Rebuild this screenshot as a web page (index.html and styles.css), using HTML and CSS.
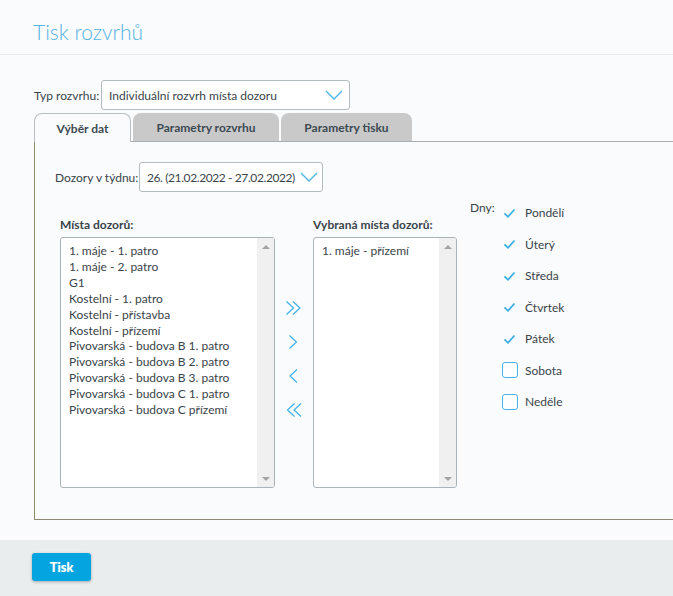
FILE: index.html
```html
<!DOCTYPE html>
<html lang="cs">
<head>
<meta charset="utf-8">
<title>Tisk rozvrhů</title>
<link rel="stylesheet" href="styles.css">
</head>
<body>
<header class="page-head">
  <h1 class="page-title">Tisk rozvrhů</h1>
</header>
<main class="page-body">
  <div class="field type-field">
    <span class="field-label">Typ rozvrhu:</span>
    <div class="select select-type">
      <span class="select-value">Individuální rozvrh místa dozoru</span>
      <svg class="chev" viewBox="0 0 18 10" width="18" height="10"><path d="M1 1 L9 9 L17 1"/></svg>
    </div>
  </div>
  <nav class="tabs">
    <div class="tab tab-active tab-1">Výběr dat</div>
    <div class="tab tab-2">Parametry rozvrhu</div>
    <div class="tab tab-3">Parametry tisku</div>
  </nav>
  <section class="panel">
    <div class="field week-field">
      <span class="field-label">Dozory v týdnu:</span>
      <div class="select select-week">
        <span class="select-value">26. (21.02.2022 - 27.02.2022)</span>
        <svg class="chev" viewBox="0 0 18 10" width="18" height="10"><path d="M1 1 L9 9 L17 1"/></svg>
      </div>
    </div>
    <div class="picker">
      <div class="list-col list-col-all">
        <div class="list-label">Místa dozorů:</div>
        <div class="listbox listbox-all">
          <ul class="list-items">
            <li>1. máje - 1. patro</li>
            <li>1. máje - 2. patro</li>
            <li>G1</li>
            <li>Kostelní - 1. patro</li>
            <li>Kostelní - přístavba</li>
            <li>Kostelní - přízemí</li>
            <li>Pivovarská - budova B 1. patro</li>
            <li>Pivovarská - budova B 2. patro</li>
            <li>Pivovarská - budova B 3. patro</li>
            <li>Pivovarská - budova C 1. patro</li>
            <li>Pivovarská - budova C přízemí</li>
          </ul>
          <div class="scrollbar"><span class="sb-up"></span><span class="sb-down"></span></div>
        </div>
      </div>
      <div class="moves">
        <button class="move" title="Přidat vše"><svg viewBox="0 0 18 16" width="18" height="16"><path d="M1.5 1.5 L8.5 8 L1.5 14.5 M8 1.5 L15 8 L8 14.5"/></svg></button>
        <button class="move" title="Přidat"><svg viewBox="0 0 18 16" width="18" height="16"><path d="M4.5 1.5 L11.5 8 L4.5 14.5"/></svg></button>
        <button class="move" title="Odebrat"><svg viewBox="0 0 18 16" width="18" height="16"><path d="M12 1.5 L5 8 L12 14.5"/></svg></button>
        <button class="move" title="Odebrat vše"><svg viewBox="0 0 18 16" width="18" height="16"><path d="M9.5 1.5 L2.5 8 L9.5 14.5 M16 1.5 L9 8 L16 14.5"/></svg></button>
      </div>
      <div class="list-col list-col-sel">
        <div class="list-label">Vybraná místa dozorů:</div>
        <div class="listbox listbox-sel">
          <ul class="list-items">
            <li>1. máje - přízemí</li>
          </ul>
          <div class="scrollbar"><span class="sb-up"></span><span class="sb-down"></span></div>
        </div>
      </div>
      <div class="days">
        <span class="days-label">Dny:</span>
        <ul class="day-list">
          <li class="day is-checked"><span class="cb"><svg viewBox="0 0 16 16" width="16" height="16"><path d="M2.5 8.3 L6 11.8 L12.5 4.5"/></svg></span>Pondělí</li>
          <li class="day is-checked"><span class="cb"><svg viewBox="0 0 16 16" width="16" height="16"><path d="M2.5 8.3 L6 11.8 L12.5 4.5"/></svg></span>Úterý</li>
          <li class="day is-checked"><span class="cb"><svg viewBox="0 0 16 16" width="16" height="16"><path d="M2.5 8.3 L6 11.8 L12.5 4.5"/></svg></span>Středa</li>
          <li class="day is-checked"><span class="cb"><svg viewBox="0 0 16 16" width="16" height="16"><path d="M2.5 8.3 L6 11.8 L12.5 4.5"/></svg></span>Čtvrtek</li>
          <li class="day is-checked"><span class="cb"><svg viewBox="0 0 16 16" width="16" height="16"><path d="M2.5 8.3 L6 11.8 L12.5 4.5"/></svg></span>Pátek</li>
          <li class="day"><span class="cb cb-empty"></span>Sobota</li>
          <li class="day"><span class="cb cb-empty"></span>Neděle</li>
        </ul>
      </div>
    </div>
  </section>
</main>
<footer class="page-foot">
  <button class="btn-print">Tisk</button>
</footer>
</body>
</html>
```
FILE: styles.css
```css
html, body {
  margin: 0;
  padding: 0;
  overflow: hidden;
}
body {
  background: #f9fbfc;
  font-family: Lato, "Liberation Sans", sans-serif;
  font-size: 12px;
  color: #3a444a;
  width: 673px;
  height: 596px;
}
ul { list-style: none; margin: 0; padding: 0; }

.page-head {
  height: 54px;
  border-bottom: 1px solid #e6eaec;
  padding-left: 33px;
}
.page-title {
  margin: 0;
  padding-top: 19px;
  font-weight: 300;
  font-size: 21px;
  line-height: 25px;
  color: #56b3e3;
}

.page-body {
  padding: 25px 0 0 34px;
}

.field {
  display: flex;
  align-items: center;
  height: 30px;
}
.field-label {
  white-space: nowrap;
}
.type-field .field-label { width: 67px; }
.week-field .field-label { width: 84px; }
.select {
  box-sizing: border-box;
  height: 30px;
  border: 1px solid #b3bcc0;
  border-radius: 3px;
  background: #fff;
  display: flex;
  align-items: center;
  padding-left: 7px;
}
.select-value { flex: 1; white-space: nowrap; }
.select-type { width: 249px; }
.select-week { width: 184px; }
.select-week .select-value { letter-spacing: -0.4px; }
.chev {
  fill: none;
  stroke: #4db4e6;
  stroke-width: 1.3;
}
.select-type .chev { margin-right: 6px; }
.select-week .chev { margin-right: 4px; }

.tabs {
  display: flex;
  align-items: flex-start;
  margin-top: 3px;
  height: 28px;
}
.tab {
  box-sizing: border-box;
  height: 28px;
  border-radius: 8px 8px 0 0;
  background: #c9c9c9;
  font-weight: bold;
  color: #3d4a52;
  display: flex;
  align-items: center;
  justify-content: center;
  margin-right: 2px;
  padding-top: 1px;
}
.tab-active {
  position: relative;
  z-index: 1;
  height: 29px;
  background: #f9fbfc;
  border: 1px solid #b7bfc3;
  border-bottom: none;
  padding-top: 0;
}
.tab-1 { width: 97px; }
.tab-2 { width: 146px; }
.tab-3 { width: 131px; }

.panel {
  box-sizing: border-box;
  height: 379px;
  border-top: 1px solid #a7afb3;
  border-left: 1px solid #8d8c70;
  border-bottom: 1px solid #8d8c70;
  padding: 20px 0 0 20px;
}

.picker {
  display: flex;
  align-items: flex-start;
  margin-top: 5px;
}
.list-col { padding-top: 20px; }
.list-col-all { margin-left: 5px; }
.list-label {
  font-weight: bold;
  line-height: 16px;
  margin-bottom: 4px;
  white-space: nowrap;
}
.listbox {
  box-sizing: border-box;
  height: 251px;
  background: #fff;
  border: 1px solid #aab3b7;
  border-radius: 3px;
  display: flex;
  overflow: hidden;
}
.listbox-all { width: 215px; }
.listbox-sel { width: 144px; }
.list-items {
  flex: 1;
  padding: 5px 8px;
  line-height: 15.9px;
  white-space: nowrap;
}
.scrollbar {
  width: 17px;
  background: #f0f0f0;
  display: flex;
  flex-direction: column;
  justify-content: space-between;
  align-items: center;
  padding: 7px 0 6px;
}
.sb-up, .sb-down {
  width: 0;
  height: 0;
  border-left: 4px solid transparent;
  border-right: 4px solid transparent;
}
.sb-up { border-bottom: 4px solid #a3a3a3; }
.sb-down { border-top: 4px solid #a3a3a3; }

.moves {
  width: 38px;
  padding-top: 94px;
  display: flex;
  flex-direction: column;
}
.move {
  height: 34px;
  padding: 0;
  margin: 0;
  border: none;
  background: none;
  display: flex;
  align-items: center;
  justify-content: center;
}
.move svg {
  fill: none;
  stroke: #3cb1e8;
  stroke-width: 1.2;
}

.days {
  display: flex;
  margin-left: 13px;
}
.days-label {
  width: 32px;
  padding-top: 3px;
  line-height: 16px;
}
.day {
  height: 31.5px;
  display: flex;
  align-items: center;
}
.cb {
  box-sizing: border-box;
  width: 16px;
  height: 16px;
  margin-right: 7px;
  display: flex;
}
.cb svg {
  fill: none;
  stroke: #3aaee5;
  stroke-width: 1.8;
}
.cb-empty {
  border: 1.5px solid #4ab3e6;
  border-radius: 3px;
  background: #fff;
}

.page-foot {
  margin-top: 20px;
  height: 70px;
  background: #e9edee;
  padding: 13px 0 0 32px;
  box-sizing: border-box;
}
.btn-print {
  width: 59px;
  height: 28px;
  border: none;
  border-radius: 3px;
  background: #04a4e1;
  color: #fff;
  font-family: Lato, "Liberation Sans", sans-serif;
  font-weight: bold;
  font-size: 13px;
  box-shadow: 0 1px 3px rgba(0, 0, 0, 0.3);
  text-shadow: 0 0 1px rgba(255, 255, 255, 0.6);
  padding: 0;
}
```
